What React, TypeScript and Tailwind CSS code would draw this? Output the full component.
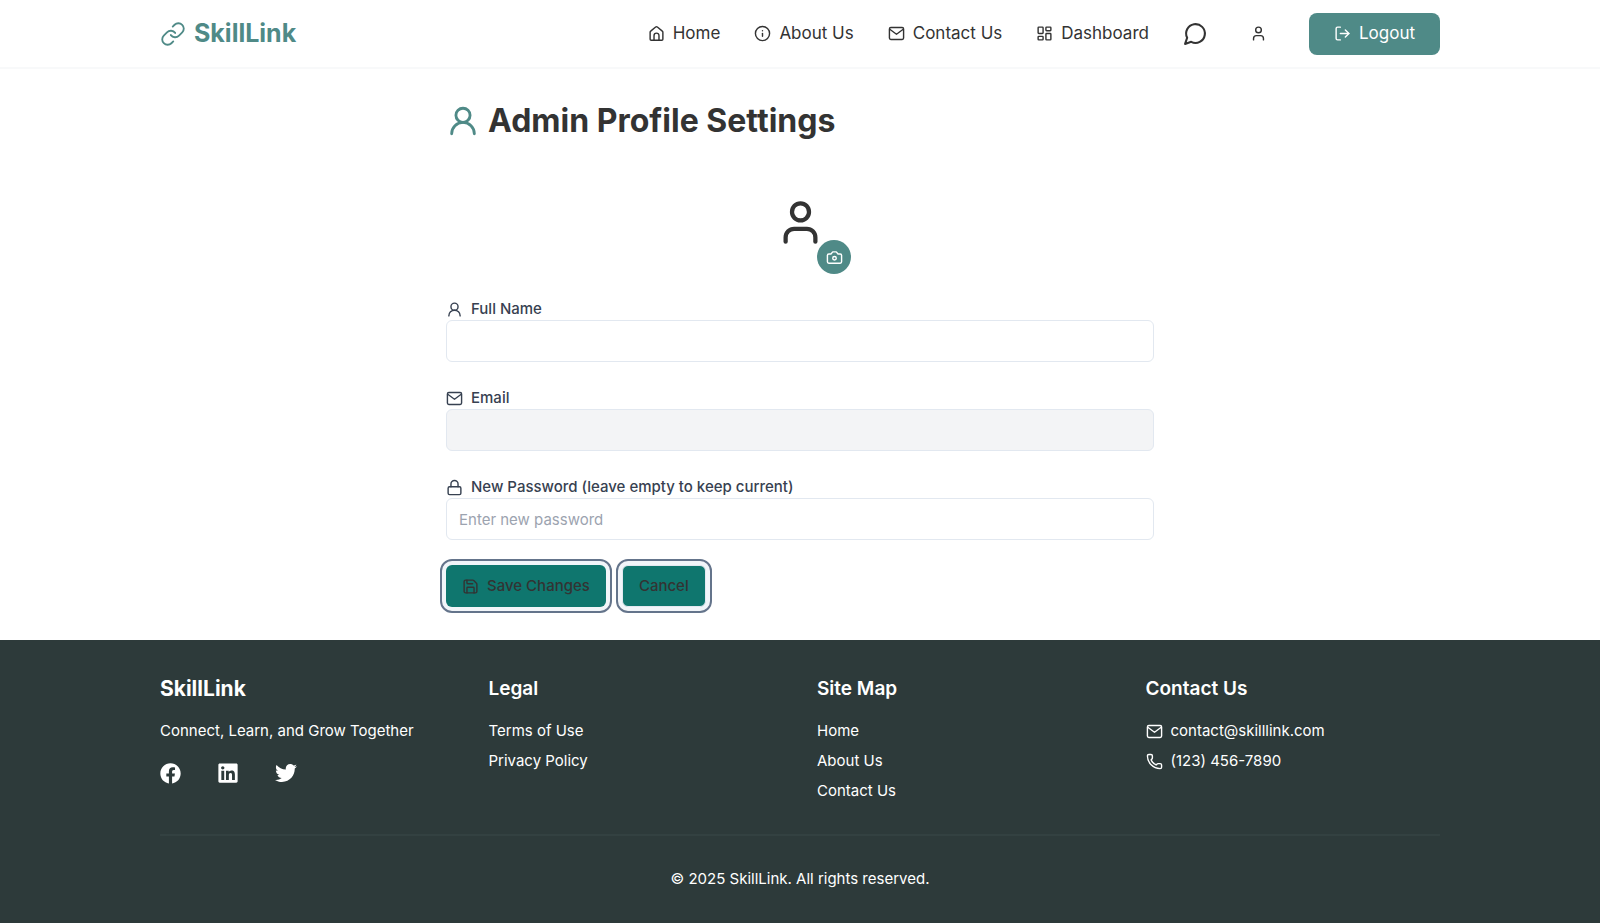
import React from "react";
import { Link, Info, LayoutDashboard, User, UserRound, LogOut, Lock, Save, Phone } from "lucide-react";
import { FaFacebook, FaLinkedin, FaTwitter } from "react-icons/fa";

type IconProps = { size?: number };
type IconType = React.ComponentType<IconProps>;

function Glyph({ size = 17, children }: IconProps & { children: React.ReactNode }) {
  return (
    <svg
      width={size}
      height={size}
      viewBox="0 0 24 24"
      fill="none"
      stroke="currentColor"
      strokeWidth={2}
      strokeLinecap="round"
      strokeLinejoin="round"
      aria-hidden="true"
    >
      {children}
    </svg>
  );
}

const HomeIcon = ({ size }: IconProps) => (
  <Glyph size={size}>
    <path d="M3 10.2a2 2 0 0 1 .8-1.6l7-5.7a2 2 0 0 1 2.4 0l7 5.7a2 2 0 0 1 .8 1.6V20a1.5 1.5 0 0 1-1.5 1.5h-15A1.5 1.5 0 0 1 3 20z" />
    <path d="M8.5 21.5V15a3.5 3.5 0 0 1 7 0v6.5" />
  </Glyph>
);

const MailIcon = ({ size }: IconProps) => (
  <Glyph size={size}>
    <rect x="2" y="3.5" width="20" height="17" rx="2" />
    <path d="m2.5 6 9.500 7 9.500-7" />
  </Glyph>
);

const ChatIcon = ({ size }: IconProps) => (
  <Glyph size={size}>
    <path d="M7.900 20A9 9 0 1 0 4 16.100L2 22Z" />
  </Glyph>
);

const CameraIcon = ({ size }: IconProps) => (
  <Glyph size={size}>
    <path d="M14.500 4h-5L7 7H4a2 2 0 0 0-2 2v9a2 2 0 0 0 2 2h16a2 2 0 0 0 2-2V9a2 2 0 0 0-2-2h-3l-2.500-3z" />
    <circle cx="12" cy="13" r="2.500" />
  </Glyph>
);

const navItems: { label: string; icon: IconType }[] = [
  { label: "Home", icon: HomeIcon },
  { label: "About Us", icon: Info },
  { label: "Contact Us", icon: MailIcon },
  { label: "Dashboard", icon: LayoutDashboard },
];

function Header() {
  return (
    <header className="border-b-2 border-[#f8f9fa] bg-white">
      <div className="mx-auto flex h-[67px] max-w-[1280px] items-center justify-between">
        <a href="#" className="flex items-center gap-2 text-[25px] font-bold text-[#4f8a87]">
          <Link size={26} strokeWidth={1.7} />
          SkillLink
        </a>
        <nav className="flex items-center gap-[34px] text-[17px] text-[#333333]">
          {navItems.map(({ label, icon: Icon }) => (
            <a key={label} href="#" className="flex items-center gap-2">
              <Icon size={17} />
              {label}
            </a>
          ))}
          <button type="button" aria-label="Messages">
            <ChatIcon size={25} />
          </button>
          <button type="button" aria-label="Account" className="px-2">
            <User size={17} />
          </button>
          <button type="button" className="flex h-[42px] items-center gap-2 rounded-lg bg-[#4f8a87] px-[25px] text-white">
            <LogOut size={17} />
            Logout
          </button>
        </nav>
      </div>
    </header>
  );
}

type FieldProps = React.InputHTMLAttributes<HTMLInputElement> & {
  id: string;
  label: string;
  icon: IconType;
};

function Field({ id, label, icon: Icon, ...input }: FieldProps) {
  return (
    <div>
      <label htmlFor={id} className="flex h-[22px] items-center gap-2 text-[15px] font-medium text-[#374151]">
        <Icon size={17} />
        {label}
      </label>
      <input
        id={id}
        className="block h-[42px] w-full rounded-md border border-[#e2e8f0] px-3 text-[15px] placeholder:text-[#9ca3af] disabled:bg-[#f3f4f6]"
        {...input}
      />
    </div>
  );
}

function Profile() {
  return (
    <main className="mx-auto flex w-full max-w-[708px] flex-col pt-[35px] pb-[33px]">
      <h1 className="flex h-[34px] items-center gap-2 text-[32px] font-bold text-[#333333]">
        <UserRound size={34} className="text-[#4f8a87]" />
        Admin Profile Settings
      </h1>
      <div className="relative mx-auto mt-[34px] flex size-[102px] justify-center pt-[25px]">
        <User size={51} className="text-[#333333]" />
        <button
          type="button"
          aria-label="Change photo"
          className="absolute right-0 bottom-0 flex size-[34px] items-center justify-center rounded-full bg-[#4f8a87] text-white"
        >
          <CameraIcon size={17} />
        </button>
      </div>
      <form className="mt-6 flex flex-col gap-[25px]">
        <Field id="name" label="Full Name" icon={UserRound} type="text" />
        <Field id="email" label="Email" icon={MailIcon} type="email" disabled />
        <Field id="password" label="New Password (leave empty to keep current)" icon={Lock} type="password" placeholder="Enter new password" />
        <div className="flex items-center gap-4 text-[15px] font-medium text-[#333333]">
          <button type="button" className="flex h-[42px] items-center gap-2 rounded-md bg-[#0f766e] px-4 ring-4 ring-[#f1f5f9] outline-2 outline-offset-4 outline-[#64748b]">
            <Save size={17} />
            Save Changes
          </button>
          <button type="button" className="h-[42px] rounded-md border border-[#e2e8f0] bg-[#0f766e] px-4 ring-4 ring-[#f1f5f9] outline-2 outline-offset-4 outline-[#64748b]">
            Cancel
          </button>
        </div>
      </form>
    </main>
  );
}

function LinkColumn({ title, links }: { title: string; links: string[] }) {
  return (
    <section>
      <h2 className="text-[19px] leading-[30px] font-semibold">{title}</h2>
      <ul className="mt-4 space-y-2 text-[15px] leading-[22px]">
        {links.map((link) => (
          <li key={link}>
            <a href="#">{link}</a>
          </li>
        ))}
      </ul>
    </section>
  );
}

function Footer() {
  return (
    <footer className="grow bg-[#2d3a3a] pt-[34px] text-white">
      <div className="mx-auto max-w-[1280px]">
        <div className="grid grid-cols-4 gap-[34px]">
          <section>
            <h2 className="text-[21px] leading-[30px] font-bold">SkillLink</h2>
            <p className="mt-4 text-[15px] leading-[22px]">Connect, Learn, and Grow Together</p>
            <div className="mt-5 flex items-center gap-9">
              <a href="#" aria-label="Facebook"><FaFacebook size={21} /></a>
              <a href="#" aria-label="LinkedIn"><FaLinkedin size={22} /></a>
              <a href="#" aria-label="Twitter"><FaTwitter size={22} /></a>
            </div>
          </section>
          <LinkColumn title="Legal" links={["Terms of Use", "Privacy Policy"]} />
          <LinkColumn title="Site Map" links={["Home", "About Us", "Contact Us"]} />
          <section>
            <h2 className="text-[19px] leading-[30px] font-semibold">Contact Us</h2>
            <ul className="mt-4 space-y-2 text-[15px] leading-[22px]">
              <li className="flex items-center gap-2"><MailIcon size={17} />contact@skilllink.com</li>
              <li className="flex items-center gap-2"><Phone size={17} />(123) 456-7890</li>
            </ul>
          </section>
        </div>
        <p className="mt-8 border-t-2 border-[#334141] pt-8 text-center text-[15px] leading-[22px]">
          © 2025 SkillLink. All rights reserved.
        </p>
      </div>
    </footer>
  );
}

export default function App() {
  return (
    <div className="flex min-h-screen flex-col bg-white font-['Inter',sans-serif]">
      <Header />
      <Profile />
      <Footer />
    </div>
  );
}
